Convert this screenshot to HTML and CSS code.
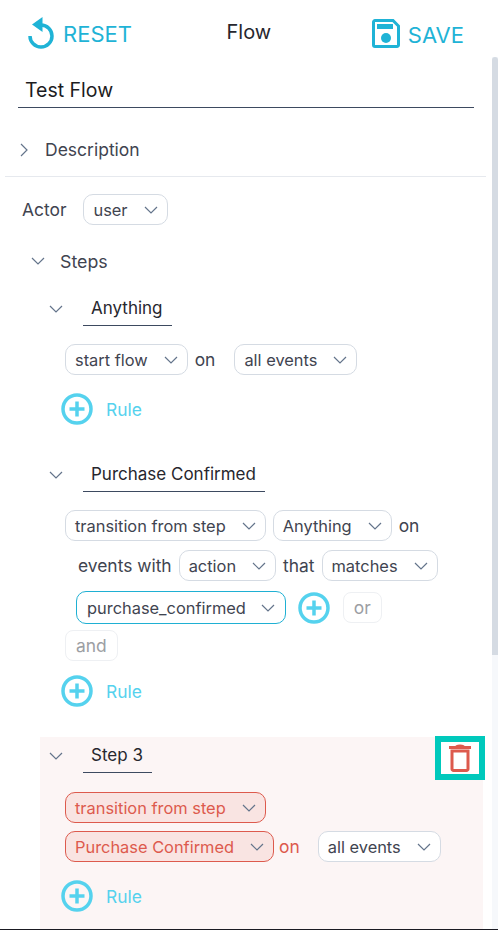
FILE: index.html
```html
<!DOCTYPE html>
<html lang="en">
<head>
    <meta charset="UTF-8">
    <meta name="viewport" content="width=device-width, initial-scale=1.0">
    <title>Flow</title>
    <link rel="stylesheet" href="styles.css">
</head>
<body>
    <svg class="defs" width="0" height="0">
        <symbol id="chev" viewBox="0 0 14 8"><path d="M1 1l6 6 6-6" fill="none" stroke="#64748b" stroke-width="1.2"/></symbol>
        <symbol id="plus" viewBox="0 0 32 32"><circle cx="16" cy="16" r="14" fill="none" stroke="#55d2ee" stroke-width="3.5"/><path d="M16 8.500v15M8.500 16h15" fill="none" stroke="#55d2ee" stroke-width="3.500"/></symbol>
    </svg>

    <div class="app">
        <header class="topbar">
            <button class="action reset">
                <svg width="26" height="32" viewBox="0 0 26 32"><path d="M13 8a11 11 0 1 1-11 11" fill="none" stroke="#1fb3d6" stroke-width="3.500"/><path d="M14.500 0v15L4 7.500z" fill="#1fb3d6"/></svg>
                <span class="action-text">RESET</span>
            </button>
            <div class="title">Flow</div>
            <button class="action save">
                <svg width="28" height="29" viewBox="0 0 28 29"><path d="M3 1.500h18l5.500 5.500v19a1.500 1.500 0 0 1-1.500 1.500H3A1.500 1.500 0 0 1 1.500 26V3A1.500 1.500 0 0 1 3 1.500z" fill="none" stroke="#1fb3d6" stroke-width="3"/><rect x="5" y="5" width="16" height="5" fill="#1fb3d6"/><circle cx="14" cy="19" r="5" fill="#1fb3d6"/></svg>
                <span class="action-text">SAVE</span>
            </button>
        </header>

        <div class="body">
            <main class="content">
                <div class="name">Test Flow</div>

                <div class="desc">
                    <svg class="side" width="8" height="14" viewBox="0 0 8 14"><path d="M1 1l6 6-6 6" fill="none" stroke="#64748b" stroke-width="1.2"/></svg>
                    <span>Description</span>
                </div>

                <div class="actor">
                    <span>Actor</span>
                    <div class="sel">user <svg class="arrow"><use href="#chev"/></svg></div>
                </div>

                <div class="steps-head">
                    <svg class="arrow"><use href="#chev"/></svg>
                    <span>Steps</span>
                </div>

                <section class="step first">
                    <div class="step-head">
                        <svg class="arrow"><use href="#chev"/></svg>
                        <div class="step-name">Anything</div>
                    </div>
                    <div class="line">
                        <div class="sel">start flow <svg class="arrow"><use href="#chev"/></svg></div>
                        <span class="word">on</span>
                        <div class="sel push">all events <svg class="arrow"><use href="#chev"/></svg></div>
                    </div>
                    <div class="rule"><svg width="32" height="32"><use href="#plus"/></svg><span>Rule</span></div>
                </section>

                <section class="step second">
                    <div class="step-head">
                        <svg class="arrow"><use href="#chev"/></svg>
                        <div class="step-name">Purchase Confirmed</div>
                    </div>
                    <div class="line">
                        <div class="sel">transition from step <svg class="arrow"><use href="#chev"/></svg></div>
                        <div class="sel">Anything <svg class="arrow"><use href="#chev"/></svg></div>
                        <span class="word">on</span>
                    </div>
                    <div class="line indent">
                        <span class="word">events with</span>
                        <div class="sel">action <svg class="arrow"><use href="#chev"/></svg></div>
                        <span class="word">that</span>
                        <div class="sel">matches <svg class="arrow"><use href="#chev"/></svg></div>
                    </div>
                    <div class="line value indent-small">
                        <div class="sel focus">purchase_confirmed <svg class="arrow"><use href="#chev"/></svg></div>
                        <svg class="add" width="32" height="32"><use href="#plus"/></svg>
                        <div class="chip or">or</div>
                    </div>
                    <div class="line and-line">
                        <div class="chip">and</div>
                    </div>
                    <div class="rule tight"><svg width="32" height="32"><use href="#plus"/></svg><span>Rule</span></div>
                </section>

                <section class="step bad">
                    <div class="step-head">
                        <svg class="arrow"><use href="#chev"/></svg>
                        <div class="step-name">Step 3</div>
                    </div>
                    <button class="trash">
                        <svg width="22" height="28" viewBox="0 0 22 28"><path d="M0 3.500h22" stroke="#dd5a4d" stroke-width="3"/><path d="M7 2.500q4-2 8 0" fill="none" stroke="#dd5a4d" stroke-width="2"/><path d="M3 7h16v18a1.500 1.500 0 0 1-1.500 1.500h-13A1.500 1.500 0 0 1 3 25z" fill="none" stroke="#dd5a4d" stroke-width="3"/></svg>
                    </button>
                    <div class="line">
                        <div class="sel err">transition from step <svg class="arrow"><use href="#chev"/></svg></div>
                    </div>
                    <div class="line">
                        <div class="sel err">Purchase Confirmed <svg class="arrow"><use href="#chev"/></svg></div>
                        <span class="word red">on</span>
                        <div class="sel push">all events <svg class="arrow"><use href="#chev"/></svg></div>
                    </div>
                    <div class="rule"><svg width="32" height="32"><use href="#plus"/></svg><span>Rule</span></div>
                </section>
            </main>
            <div class="scrollbar"><div class="thumb"></div></div>
        </div>
    </div>
</body>
</html>
```

FILE: styles.css
```css
* {
    box-sizing: border-box;
}

body {
    margin: 0;
    background: white;
    font-family: Inter, "Noto Sans", sans-serif;
    color: #3f4450;
}

.defs {
    position: absolute;
}

.app {
    width: 498px;
    height: 930px;
    overflow: hidden;
    border-bottom: 1px solid #1a1a22;
    display: flex;
    flex-direction: column;
}

.topbar {
    height: 57px;
    flex: none;
    display: flex;
    align-items: flex-start;
    justify-content: space-between;
    padding: 17px 34px 0 28px;
}

.action {
    border: 0;
    background: none;
    padding: 0;
    font: 22px Inter, sans-serif;
    color: #1fb3d6;
    display: flex;
    align-items: center;
    gap: 9px;
}

.action-text {
    padding-top: 2px;
}

.save {
    padding-top: 2px;
    gap: 8px;
}

.title {
    font-size: 20px;
    color: #27272e;
    margin: 3px 0 0 -6px;
}

.body {
    flex: 1;
    min-height: 0;
    display: flex;
}

.content {
    flex: 1;
    min-width: 0;
    padding: 17px 0 0;
    overflow: hidden;
}

.scrollbar {
    width: 6px;
    flex: none;
    background: #f6f8fb;
}

.thumb {
    height: 598px;
    background: #d5dbe3;
    border-radius: 3px 3px 0 0;
}

.name {
    margin: 0 18px;
    width: 456px;
    height: 34px;
    padding-left: 7px;
    font-size: 19.5px;
    line-height: 32px;
    color: #1c1c22;
    border-bottom: 1px solid #3d4a60;
}

.desc {
    margin: 0 0 0 5px;
    width: 481px;
    height: 69px;
    padding: 15px 0 0 15px;
    display: flex;
    align-items: center;
    gap: 17px;
    font-size: 17.5px;
    border-bottom: 1px solid #e6e9ee;
}

.actor {
    margin-top: 17px;
    padding-left: 22px;
    display: flex;
    align-items: center;
    gap: 17px;
    font-size: 17.4px;
}

.sel {
    height: 31px;
    flex: none;
    padding: 0 9px;
    display: inline-flex;
    align-items: center;
    gap: 16px;
    font-size: 16.4px;
    color: #3f4450;
    background: white;
    border: 1px solid #d5dbe3;
    border-radius: 10px;
}

.arrow {
    width: 14px;
    height: 8px;
    flex: none;
}

.steps-head {
    margin-top: 21px;
    padding-left: 31px;
    height: 30px;
    display: flex;
    align-items: center;
    gap: 15px;
    font-size: 17.8px;
}

.step {
    padding-left: 25px;
}

.step-head {
    display: flex;
    align-items: center;
    gap: 20px;
    padding-left: 24px;
}

.step-name {
    height: 34px;
    padding: 0 9px 0 8px;
    font-size: 17px;
    line-height: 32px;
    color: #27272e;
    border-bottom: 1px solid #3d4a60;
}

.line {
    display: flex;
    align-items: center;
    gap: 7px;
    padding-left: 40px;
    margin-bottom: 9px;
}

.word {
    font-size: 17.4px;
}

.push {
    margin-left: 12px;
}

.rule {
    display: flex;
    align-items: center;
    gap: 13px;
    padding-left: 36px;
    margin-top: 18px;
    font-size: 17.4px;
    color: #55d2ee;
}

.first {
    margin-top: 16px;
}

.first .step-head {
    margin-bottom: 18px;
}

.second {
    margin-top: 33px;
}

.second .step-head {
    margin-bottom: 18px;
}

.indent {
    padding-left: 53px;
    margin-bottom: 10px;
}

.indent-small {
    padding-left: 51px;
    margin-bottom: 6px;
}

.focus {
    height: 33px;
    border-color: #1fb0d3;
    gap: 15px;
    padding: 0 10px;
}

.add {
    margin-left: 5px;
    flex: none;
}

.chip {
    height: 31px;
    padding: 0 10px;
    display: flex;
    align-items: center;
    font-size: 17.4px;
    color: #9c9ea3;
    border: 1px solid #eef0f3;
    border-radius: 8px;
}

.or {
    margin-left: 6px;
}

.rule.tight {
    margin-top: 14px;
}

.bad {
    position: relative;
    margin: 30px 9px 0 40px;
    padding: 2px 0 20px 0;
    background: #fcf5f5;
    min-height: 200px;
}

.bad .step-head {
    padding-left: 9px;
    margin-bottom: 19px;
}

.bad .line {
    padding-left: 25px;
    margin-bottom: 8px;
}

.bad .line .word {
    margin-left: -2px;
}

.bad .line .push {
    margin-left: 11px;
}

.bad .rule {
    padding-left: 21px;
    margin-top: 18px;
}

.err {
    background: #f9e4e2;
    border-color: #dd5a4d;
    color: #dd5a4d;
}

.red {
    color: #dd5a4d;
}

.trash {
    position: absolute;
    top: -1px;
    right: -2px;
    width: 50px;
    height: 44px;
    padding: 0;
    background: white;
    border: 6px solid #00c9bc;
    display: flex;
    align-items: center;
    justify-content: center;
}
```
